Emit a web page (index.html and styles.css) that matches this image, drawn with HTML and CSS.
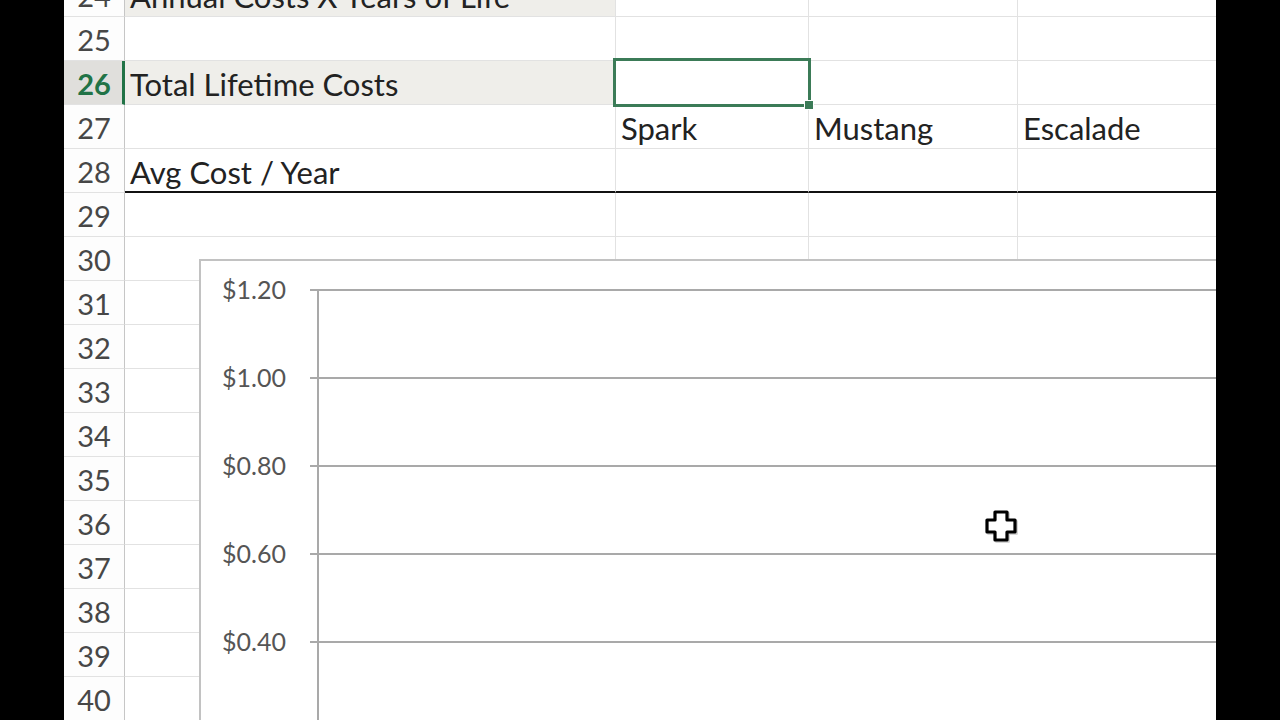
FILE: index.html
```html
<!DOCTYPE html>
<html>
<head>
<meta charset="utf-8">
<link rel="stylesheet" href="styles.css">
</head>
<body>
<div class="screen">
  <div class="rows">
    <div class="row"><div class="hdr">24</div><div class="cell a fill">Annual Costs X Years of Life</div><div class="cell b"></div><div class="cell c"></div><div class="cell d"></div></div>
    <div class="row"><div class="hdr">25</div><div class="cell a"></div><div class="cell b"></div><div class="cell c"></div><div class="cell d"></div></div>
    <div class="row"><div class="hdr active">26</div><div class="cell a fill">Total Lifetime Costs</div><div class="cell b sel"><span class="selbox"><span class="handle"></span></span></div><div class="cell c"></div><div class="cell d"></div></div>
    <div class="row"><div class="hdr">27</div><div class="cell a"></div><div class="cell b">Spark</div><div class="cell c">Mustang</div><div class="cell d">Escalade</div></div>
    <div class="row thick"><div class="hdr">28</div><div class="cell a">Avg Cost / Year</div><div class="cell b"></div><div class="cell c"></div><div class="cell d"></div></div>
    <div class="row"><div class="hdr">29</div><div class="cell a"></div><div class="cell b"></div><div class="cell c"></div><div class="cell d"></div></div>
    <div class="row"><div class="hdr">30</div><div class="cell a"></div><div class="cell b"></div><div class="cell c"></div><div class="cell d"></div></div>
    <div class="row"><div class="hdr">31</div><div class="cell a"></div><div class="cell b"></div><div class="cell c"></div><div class="cell d"></div></div>
    <div class="row"><div class="hdr">32</div><div class="cell a"></div><div class="cell b"></div><div class="cell c"></div><div class="cell d"></div></div>
    <div class="row"><div class="hdr">33</div><div class="cell a"></div><div class="cell b"></div><div class="cell c"></div><div class="cell d"></div></div>
    <div class="row"><div class="hdr">34</div><div class="cell a"></div><div class="cell b"></div><div class="cell c"></div><div class="cell d"></div></div>
    <div class="row"><div class="hdr">35</div><div class="cell a"></div><div class="cell b"></div><div class="cell c"></div><div class="cell d"></div></div>
    <div class="row"><div class="hdr">36</div><div class="cell a"></div><div class="cell b"></div><div class="cell c"></div><div class="cell d"></div></div>
    <div class="row"><div class="hdr">37</div><div class="cell a"></div><div class="cell b"></div><div class="cell c"></div><div class="cell d"></div></div>
    <div class="row"><div class="hdr">38</div><div class="cell a"></div><div class="cell b"></div><div class="cell c"></div><div class="cell d"></div></div>
    <div class="row"><div class="hdr">39</div><div class="cell a"></div><div class="cell b"></div><div class="cell c"></div><div class="cell d"></div></div>
    <div class="row"><div class="hdr">40</div><div class="cell a"></div><div class="cell b"></div><div class="cell c"></div><div class="cell d"></div></div>
  </div>

  <div class="chart">
    <div class="ylabels">
      <div class="ylab">$1.20</div>
      <div class="ylab">$1.00</div>
      <div class="ylab">$0.80</div>
      <div class="ylab">$0.60</div>
      <div class="ylab">$0.40</div>
    </div>
    <div class="plot">
      <div class="gl"></div>
      <div class="gl"></div>
      <div class="gl"></div>
      <div class="gl"></div>
      <div class="gl"></div>
    </div>
  </div>

  <svg class="cursor" width="36" height="36" viewBox="0 0 36 36">
    <path d="M11 3 H23 V11 H31 V23 H23 V31 H11 V23 H3 V11 H11 Z" fill="none" stroke="#bbb" stroke-width="3" stroke-linejoin="round" transform="translate(1.5 1.5)" opacity="0.6"/>
    <path d="M11 3 H23 V11 H31 V23 H23 V31 H11 V23 H3 V11 H11 Z" fill="#fff" stroke="#000" stroke-width="3.2" stroke-linejoin="round"/>
  </svg>
</div>
</body>
</html>
```

FILE: styles.css
```css
html, body {
  margin: 0;
  padding: 0;
  background: #000;
}

.screen {
  position: relative;
  width: 1152px;
  height: 720px;
  margin-left: 64px;
  background: #fff;
  overflow: hidden;
  font-family: "Lato", "Liberation Sans", sans-serif;
}

.rows {
  margin-top: -27px;
}

.row {
  display: flex;
  height: 44px;
}

.hdr {
  box-sizing: border-box;
  width: 61px;
  height: 44px;
  flex: none;
  border-right: 1px solid #c6c6c6;
  border-bottom: 1px solid #e2e2e2;
  background: #fdfdfd;
  color: #474747;
  font-size: 29px;
  line-height: 46px;
  text-align: center;
}

.hdr.active {
  background: #e0dfdc;
  color: #217346;
  font-weight: 700;
  border-right: 3px solid #217346;
  padding-left: 2px;
}

.cell {
  box-sizing: border-box;
  height: 44px;
  flex: none;
  border-right: 1px solid #e2e2e2;
  border-bottom: 1px solid #e2e2e2;
  padding-left: 5px;
  color: #222;
  font-size: 31px;
  line-height: 47px;
  white-space: nowrap;
  overflow: visible;
}

.cell.a { width: 491px; }
.cell.b { width: 193px; }
.cell.c { width: 209px; }
.cell.d { flex: 1; border-right: none; }

.cell.fill {
  background: #efeeea;
}

.row.thick .cell {
  border-bottom: 2px solid #111;
}

.cell.sel {
  position: relative;
}

.selbox {
  position: absolute;
  left: -3px;
  top: -3px;
  right: -3px;
  bottom: -3px;
  border: 3px solid #3b7b57;
}

.handle {
  position: absolute;
  right: -6px;
  bottom: -6px;
  width: 8px;
  height: 8px;
  background: #3b7b57;
  border: 1px solid #fff;
}

.chart {
  position: absolute;
  left: 135px;
  top: 259px;
  right: -10px;
  bottom: -10px;
  display: flex;
  border: 2px solid #c2c2c2;
  background: #fff;
  padding-top: 28px;
}

.ylabels {
  width: 85px;
  padding-right: 24px;
  flex: none;
}

.ylab {
  height: 88px;
  margin-top: -16px;
  margin-bottom: 16px;
  line-height: 32px;
  text-align: right;
  color: #555;
  font-size: 25px;
}

.plot {
  flex: 1;
  background: linear-gradient(#a9a9a9, #a9a9a9) 7px 0 / 2px 100% no-repeat;
}

.gl {
  box-sizing: border-box;
  height: 88px;
  border-top: 2px solid #a9a9a9;
}

.cursor {
  position: absolute;
  left: 920px;
  top: 509px;
}
```
